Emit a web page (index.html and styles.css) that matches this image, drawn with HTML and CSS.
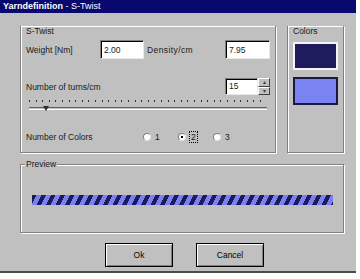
FILE: index.html
```html
<!DOCTYPE html>
<html lang="en">
<head>
    <meta charset="UTF-8">
    <title>Yarndefinition - S-Twist</title>
    <link rel="stylesheet" href="styles.css">
</head>
<body>

<div class="window">
    <div class="titlebar"><b>Yarndefinition</b> - S-Twist</div>

    <div class="client">
        <div class="top">
            <div class="group twist">
                <div class="group-title">S-Twist</div>

                <div class="row weight">
                    <span class="lbl w-lbl">Weight [Nm]</span>
                    <span class="edit w-edit">2.00</span>
                    <span class="lbl d-lbl">Density/cm</span>
                    <span class="edit d-edit">7.95</span>
                </div>

                <div class="row turns">
                    <span class="lbl">Number of turns/cm</span>
                    <span class="spin">
                        <span class="edit spin-edit">15</span>
                        <span class="spin-btns">
                            <span class="spin-btn">&#9652;</span>
                            <span class="spin-btn">&#9662;</span>
                        </span>
                    </span>
                </div>

                <div class="slider">
                    <div class="ticks"></div>
                    <div class="track"></div>
                    <div class="thumb"></div>
                </div>

                <div class="row ncolors">
                    <span class="lbl n-lbl">Number of Colors</span>
                    <span class="radio"><span class="dot"></span>1</span>
                    <span class="radio checked"><span class="dot"></span><span class="focus">2</span></span>
                    <span class="radio"><span class="dot"></span>3</span>
                </div>
            </div>

            <div class="group colors">
                <div class="group-title">Colors</div>
                <div class="swatch dark"></div>
                <div class="swatch light"></div>
            </div>
        </div>

        <div class="group preview">
            <span class="legend">Preview</span>
            <div class="yarn"></div>
        </div>

        <div class="buttons">
            <button class="btn">Ok</button>
            <button class="btn">Cancel</button>
        </div>
    </div>
</div>

</body>
</html>
```

FILE: styles.css
```css
html, body {
    margin: 0;
    padding: 0;
    background: #ffffff;
}
body {
    font-family: 'Liberation Sans', Arial, sans-serif;
    font-size: 8.5px;
    color: #1a1a1a;
}
.window {
    width: 356px;
    height: 273px;
    background-color: #c0c0c0;
    border-bottom: 2px solid #4a4a4a;
    box-sizing: border-box;
}
.titlebar {
    height: 13px;
    line-height: 13px;
    font-size: 9px;
    background-color: #08086e;
    color: #fff;
    padding-left: 3px;
}
.client {
    padding: 13px 12px 0 20px;
}
.top {
    display: flex;
    gap: 11px;
    height: 127px;
}
.group {
    position: relative;
    border: 1px solid #808080;
    box-shadow: 1px 1px 0 #fff, inset 1px 1px 0 #fff;
    box-sizing: border-box;
}
.top .group {
    border-top: none;
}
.twist {
    width: 256px;
    padding: 0 5px 0 5px;
}
.colors {
    width: 57px;
    padding: 0 5px;
}
.group-title {
    height: 10px;
    line-height: 10px;
}
.row {
    display: flex;
    align-items: center;
}
.edit {
    display: block;
    background: #fff;
    border-top: 1px solid #808080;
    border-left: 1px solid #808080;
    border-right: 1px solid #e8e8e8;
    border-bottom: 1px solid #e8e8e8;
    box-shadow: inset 1px 1px 0 #000;
    box-sizing: border-box;
    padding: 0 3px;
}
.weight {
    margin-top: 4px;
    height: 19px;
}
.weight .edit {
    height: 19px;
    line-height: 18px;
}
.w-lbl {
    width: 74px;
}
.w-edit {
    width: 44px;
}
.d-lbl {
    width: 78px;
    margin-left: 3px;
    letter-spacing: 0.4px;
}
.d-edit {
    width: 45px;
}
.turns {
    margin-top: 19px;
    height: 17px;
    justify-content: space-between;
}
.spin {
    display: flex;
    width: 45px;
    height: 17px;
}
.spin-edit {
    flex: 1;
    line-height: 15px;
}
.spin-btns {
    display: flex;
    flex-direction: column;
    width: 12px;
}
.spin-btn {
    flex: 1;
    background: #c0c0c0;
    border-top: 1px solid #fff;
    border-left: 1px solid #fff;
    border-right: 1px solid #404040;
    border-bottom: 1px solid #404040;
    box-sizing: border-box;
    font-size: 6px;
    line-height: 6px;
    text-align: center;
    color: #404040;
    overflow: hidden;
}
.slider {
    position: relative;
    margin: 5px 0 0 3px;
    width: 238px;
    height: 14px;
}
.ticks {
    height: 2px;
    margin-top: 3px;
    background: repeating-linear-gradient(to right, #303030 0 1px, transparent 1px 6.6px);
}
.track {
    margin-top: 5px;
    height: 1px;
    border-top: 1px solid #606060;
    border-bottom: 1px solid #fff;
}
.thumb {
    position: absolute;
    left: 14px;
    top: 6px;
    width: 0;
    height: 0;
    border-left: 3px solid transparent;
    border-right: 3px solid transparent;
    border-top: 5px solid #303030;
}
.ncolors {
    margin-top: 17px;
    height: 12px;
}
.n-lbl {
    width: 117px;
}
.radio {
    display: flex;
    align-items: center;
    width: 35px;
    gap: 4px;
}
.dot {
    width: 8px;
    height: 8px;
    border-radius: 50%;
    background: #fff;
    border: 1px solid #808080;
    border-right-color: #e0e0e0;
    border-bottom-color: #e0e0e0;
    box-sizing: border-box;
    position: relative;
}
.checked .dot::after {
    content: "";
    position: absolute;
    left: 2px;
    top: 2px;
    width: 2px;
    height: 2px;
    background: #000;
}
.focus {
    outline: 1px dotted #000;
    padding: 0 1px;
}
.colors .group-title {
    margin-bottom: 6px;
}
.swatch {
    width: 45px;
    height: 28px;
    box-sizing: border-box;
}
.swatch.dark {
    background: #1e1c5c;
    border: 2px solid #f4f4f4;
}
.swatch.light {
    margin-top: 7px;
    background: #7b82f2;
    border: 2px solid #1a1a40;
}
.preview {
    margin-top: 11px;
    height: 69px;
    padding: 30px 0 0 11px;
}
.legend {
    position: absolute;
    left: 4px;
    top: -6px;
    padding: 0 1px;
    line-height: 10px;
    background: #c0c0c0;
}
.yarn {
    width: 301px;
    height: 10px;
    background: repeating-linear-gradient(116.57deg, #1c1a5a 0 4px, #7a80f0 4px 8.5px);
}
.buttons {
    display: flex;
    gap: 23px;
    margin-top: 10px;
    padding-left: 85px;
}
.btn {
    width: 68px;
    height: 24px;
    font-family: 'Liberation Sans', Arial, sans-serif;
    font-size: 8.5px;
    background: #c0c0c0;
    border: 1px solid #000;
    box-shadow: inset 1px 1px 0 #fff, inset -1px -1px 0 #808080;
    padding: 0;
    color: #000;
}
```
